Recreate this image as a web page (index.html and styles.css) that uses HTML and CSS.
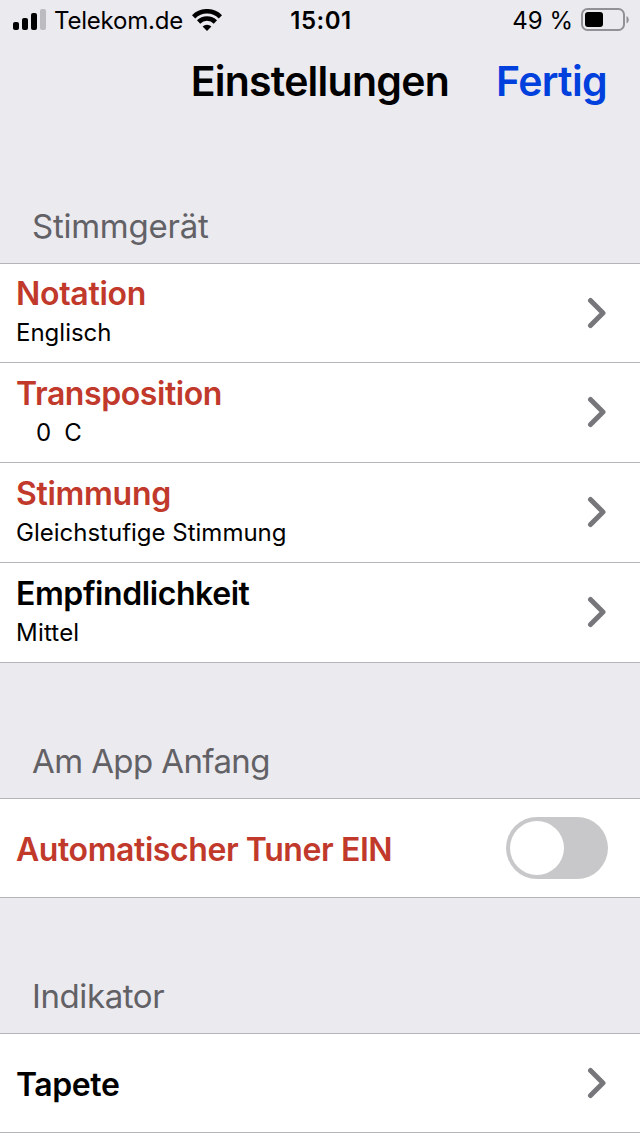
FILE: index.html
```html
<!DOCTYPE html>
<html lang="de">
<head>
  <meta charset="utf-8">
  <title>Einstellungen</title>
  <link rel="stylesheet" href="styles.css">
</head>
<body>
  <div class="status-bar">
    <div class="status-left">
      <svg class="signal" width="34" height="22" viewBox="0 0 34 22">
        <rect x="0" y="13" width="6" height="8" rx="2"/>
        <rect x="9" y="9" width="6" height="12" rx="2"/>
        <rect x="18" y="4" width="6" height="17" rx="2"/>
        <rect class="signal-off" x="27" y="0" width="6" height="21" rx="2"/>
      </svg>
      <span class="carrier">Telekom.de</span>
      <svg class="wifi" width="30" height="22" viewBox="0 0 30 22">
        <path d="M1.600 7.800a19 19 0 0 1 26.800 0M6.600 13a11.900 11.900 0 0 1 16.800 0"/>
        <path class="wifi-dot" d="M10.600 17.500a6.200 6.200 0 0 1 8.800 0L15 22z"/>
      </svg>
    </div>
    <span class="clock">15:01</span>
    <div class="status-right">
      <span class="percent">49 %</span>
      <svg class="battery" width="48" height="24" viewBox="0 0 48 24">
        <rect class="battery-case" x="1" y="1" width="42" height="21" rx="5.5"/>
        <rect x="4" y="4" width="18" height="15" rx="3"/>
        <path class="battery-tip" d="M45.500 8c3 1.500 3 6 0 7.500z"/>
      </svg>
    </div>
  </div>

  <header class="nav-bar">
    <h1>Einstellungen</h1>
    <a class="done" href="#">Fertig</a>
  </header>

  <main>
    <h2 class="tuner">Stimmgerät</h2>
    <ul class="group">
      <li class="row">
        <div class="labels">
          <span class="label notation red">Notation</span>
          <span class="value">Englisch</span>
        </div>
        <svg class="chevron" width="20" height="32" viewBox="0 0 20 32"><path d="M3.500 3.500L16 16L3.500 28.500"/></svg>
      </li>
      <li class="row">
        <div class="labels">
          <span class="label transposition red">Transposition</span>
          <span class="value pitch"><span>0</span><span>C</span></span>
        </div>
        <svg class="chevron" width="20" height="32" viewBox="0 0 20 32"><path d="M3.500 3.500L16 16L3.500 28.500"/></svg>
      </li>
      <li class="row">
        <div class="labels">
          <span class="label temperament red">Stimmung</span>
          <span class="value">Gleichstufige Stimmung</span>
        </div>
        <svg class="chevron" width="20" height="32" viewBox="0 0 20 32"><path d="M3.500 3.500L16 16L3.500 28.500"/></svg>
      </li>
      <li class="row">
        <div class="labels">
          <span class="label sensitivity">Empfindlichkeit</span>
          <span class="value sensitivity-value">Mittel</span>
        </div>
        <svg class="chevron" width="20" height="32" viewBox="0 0 20 32"><path d="M3.500 3.500L16 16L3.500 28.500"/></svg>
      </li>
    </ul>

    <h2 class="startup">Am App Anfang</h2>
    <ul class="group">
      <li class="row">
        <span class="label autotuner red">Automatischer Tuner EIN</span>
        <span class="switch"><span class="knob"></span></span>
      </li>
    </ul>

    <h2 class="indicator">Indikator</h2>
    <ul class="group last">
      <li class="row">
        <span class="label wallpaper">Tapete</span>
        <svg class="chevron" width="20" height="32" viewBox="0 0 20 32"><path d="M3.500 3.500L16 16L3.500 28.500"/></svg>
      </li>
    </ul>
  </main>
</body>
</html>
```
FILE: styles.css
```css
* {
  box-sizing: border-box;
}

body {
  margin: 0;
  height: 1136px;
  overflow: hidden;
  display: flex;
  flex-direction: column;
  background-color: #ebeaef;
  color: #000;
  font-family: Inter, "Liberation Sans", sans-serif;
  white-space: nowrap;
}

svg {
  display: block;
  flex: none;
}

/* status bar */
.status-bar {
  height: 40px;
  padding: 0 11px 0 13px;
  display: grid;
  grid-template-columns: 1fr auto 1fr;
  align-items: center;
  font-size: 24px;
  line-height: 40px;
}

.status-left,
.status-right {
  display: flex;
  align-items: center;
}

.status-right {
  justify-content: flex-end;
}

.status-bar span {
  padding-top: 2px;
  line-height: 38px;
}

.signal-off {
  fill: #bcbbc0;
}

.carrier {
  margin-left: 7px;
  width: 128px;
  letter-spacing: -0.2px;
}

.wifi {
  margin-left: 9.500px;
}

.wifi path {
  fill: none;
  stroke: #000;
  stroke-width: 4.6;
}

.wifi .wifi-dot {
  fill: #000;
  stroke: none;
}

.clock {
  font-weight: 600;
  letter-spacing: 0.5px;
}

.percent {
  margin-right: 8px;
}

.battery-case {
  fill: none;
  stroke: #929196;
  stroke-width: 2;
}

.battery-tip {
  fill: #929196;
}

/* title */
.nav-bar {
  height: 84px;
  padding: 0 33px;
  display: flex;
  justify-content: flex-end;
  gap: 47px;
  line-height: 83px;
  font-size: 41px;
  letter-spacing: -0.75px;
}

h1 {
  margin: 0;
  font-size: 41px;
  font-weight: 600;
}

.done {
  color: #0040dd;
  font-weight: 600;
  letter-spacing: -0.65px;
  text-decoration: none;
}

/* settings list */
main {
  flex: 1;
  display: flex;
  flex-direction: column;
}

h2 {
  margin: 0;
  height: 135px;
  padding: 78px 32px 0;
  color: #626166;
  font-size: 33px;
  font-weight: 400;
  line-height: 40px;
}

h2.tuner {
  height: 139px;
  padding-top: 82px;
  letter-spacing: -0.25px;
}

h2.startup {
  letter-spacing: -0.6px;
}

h2.indicator {
  letter-spacing: -0.4px;
}

.group {
  margin: 0;
  padding: 0;
  list-style: none;
  background-color: #fff;
}

.group.last {
  flex: 1;
}

.row {
  height: 100px;
  padding: 0 33px 0 16px;
  display: flex;
  align-items: center;
  justify-content: space-between;
  border-bottom: 1px solid #b5b4b8;
}

.row:first-child {
  border-top: 1px solid #b5b4b8;
}

.labels {
  display: flex;
  flex-direction: column;
}

.label {
  padding-top: 1px;
  font-size: 32px;
  font-weight: 600;
  line-height: 40px;
  letter-spacing: -0.42px;
}

.labels .value {
  margin: -1px 0 1px;
  line-height: 39px;
}

.notation,
.temperament {
  letter-spacing: -0.3px;
}

.autotuner,
.wallpaper {
  padding-top: 3px;
}

.red {
  color: #c1392b;
}

.value {
  font-size: 24px;
}

.sensitivity-value {
  letter-spacing: 0.2px;
}

.pitch {
  padding-left: 20px;
  display: flex;
  gap: 13px;
}

.chevron {
  margin-bottom: 1px;
}

.chevron path {
  fill: none;
  stroke: #77767b;
  stroke-width: 5;
  stroke-linecap: round;
  stroke-linejoin: round;
}

.switch {
  width: 102px;
  height: 62px;
  margin-right: -1px;
  padding: 4px;
  border-radius: 31px;
  background-color: #c8c8ca;
}

.knob {
  display: block;
  width: 54px;
  height: 54px;
  border-radius: 50%;
  background-color: #fff;
}
```
